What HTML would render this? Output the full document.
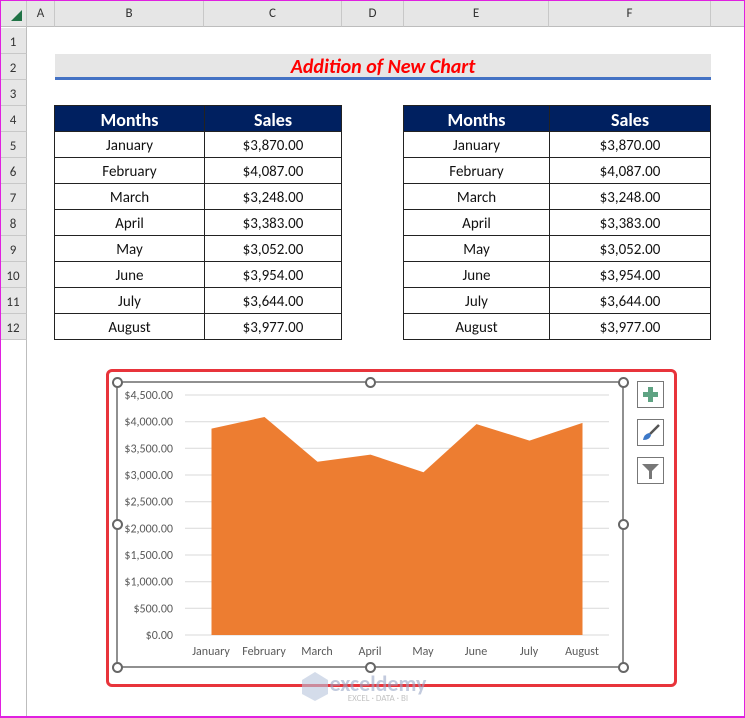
<!DOCTYPE html>
<html><head><meta charset="utf-8"><style>
*{margin:0;padding:0;box-sizing:border-box}
body{width:745px;height:718px;overflow:hidden;background:#fff;font-family:Calibri,"Liberation Sans",sans-serif;position:relative}
.a{position:absolute}
.ch{position:absolute;top:0;height:27px;background:#e6e6e6;border-right:1px solid #c8c8c8;border-bottom:1px solid #bdbdbd;font-size:13px;color:#333;text-align:center;line-height:27px}
.rh{position:absolute;left:0;width:27px;height:26px;background:#e6e6e6;border-bottom:1px solid #c8c8c8;border-right:1px solid #bdbdbd;font-size:13px;color:#333;text-align:center;line-height:29px}
table{position:absolute;border-collapse:collapse;font-size:15px}
td{border:1px solid #222;height:26px;text-align:center;padding:0;color:#111;padding-top:2px}
th{background:#002060;color:#fff;border:1px solid #222;height:26px;font-size:18px;font-weight:bold;padding-top:2px}
.btn{position:absolute;left:637px;width:27px;height:27px;border:1px solid #777;background:#fff}
.h{position:absolute;width:11px;height:11px;border:2px solid #666;border-radius:50%;background:#fff}
</style></head><body>
<div class="a" style="left:0;top:0;width:27px;height:718px;background:#fff;border-right:1px solid #bdbdbd"></div>
<div class="ch" style="left:0;width:27px"><svg width="27" height="27"><polygon points="11,21 22,21 22,10" fill="#217346"/></svg></div>
<div class="ch" style="left:27px;width:28px">A</div>
<div class="ch" style="left:55px;width:149px">B</div>
<div class="ch" style="left:204px;width:138px">C</div>
<div class="ch" style="left:342px;width:62px">D</div>
<div class="ch" style="left:404px;width:145px">E</div>
<div class="ch" style="left:549px;width:162px">F</div>
<div class="ch" style="left:711px;width:34px;border-right:none"></div>
<div class="rh" style="top:28px">1</div><div class="rh" style="top:54px">2</div><div class="rh" style="top:80px">3</div><div class="rh" style="top:106px">4</div><div class="rh" style="top:132px">5</div><div class="rh" style="top:158px">6</div><div class="rh" style="top:184px">7</div><div class="rh" style="top:210px">8</div><div class="rh" style="top:236px">9</div><div class="rh" style="top:262px">10</div><div class="rh" style="top:288px">11</div><div class="rh" style="top:314px">12</div>
<div class="a" style="left:55px;top:54px;width:656px;height:26px;background:#e6e6e6;border-bottom:3px solid #4472c4;text-align:center;color:#f00;font-style:italic;font-weight:bold;font-size:20px;line-height:26px">Addition of New Chart</div>
<table style="left:54px;top:105px;width:288px"><tr><th style="width:150px">Months</th><th>Sales</th></tr>
<tr><td>January</td><td>$3,870.00</td></tr><tr><td>February</td><td>$4,087.00</td></tr><tr><td>March</td><td>$3,248.00</td></tr><tr><td>April</td><td>$3,383.00</td></tr><tr><td>May</td><td>$3,052.00</td></tr><tr><td>June</td><td>$3,954.00</td></tr><tr><td>July</td><td>$3,644.00</td></tr><tr><td>August</td><td>$3,977.00</td></tr></table>
<table style="left:403px;top:105px;width:308px"><tr><th style="width:146px">Months</th><th>Sales</th></tr>
<tr><td>January</td><td>$3,870.00</td></tr><tr><td>February</td><td>$4,087.00</td></tr><tr><td>March</td><td>$3,248.00</td></tr><tr><td>April</td><td>$3,383.00</td></tr><tr><td>May</td><td>$3,052.00</td></tr><tr><td>June</td><td>$3,954.00</td></tr><tr><td>July</td><td>$3,644.00</td></tr><tr><td>August</td><td>$3,977.00</td></tr></table>
<div class="a" style="left:106px;top:369px;width:571px;height:318px;border:3px solid #e8343b;border-radius:6px"></div>
<svg class="a" style="left:0;top:0" width="745" height="718" font-family="Calibri,'Liberation Sans',sans-serif" font-size="12" fill="#595959">
<rect x="117" y="382" width="506" height="285" fill="none" stroke="#555" stroke-width="1.3"/>
<g stroke="#d9d9d9">
<line x1="185" y1="395" x2="609" y2="395"/><line x1="185" y1="421.7" x2="609" y2="421.7"/><line x1="185" y1="448.3" x2="609" y2="448.3"/><line x1="185" y1="475" x2="609" y2="475"/><line x1="185" y1="501.7" x2="609" y2="501.7"/><line x1="185" y1="528.3" x2="609" y2="528.3"/><line x1="185" y1="555" x2="609" y2="555"/><line x1="185" y1="581.7" x2="609" y2="581.7"/><line x1="185" y1="608.3" x2="609" y2="608.3"/><line x1="185" y1="635" x2="609" y2="635"/>
</g>
<polygon fill="#ed7d31" points="211.5,635 211.5,428.6 264.5,417.0 317.5,461.8 370.5,454.6 423.5,472.2 476.5,424.1 529.5,440.6 582.5,422.9 582.5,635"/>
<g text-anchor="end">
<text x="173" y="399">$4,500.00</text><text x="173" y="425.7">$4,000.00</text><text x="173" y="452.3">$3,500.00</text><text x="173" y="479">$3,000.00</text><text x="173" y="505.7">$2,500.00</text><text x="173" y="532.3">$2,000.00</text><text x="173" y="559">$1,500.00</text><text x="173" y="585.7">$1,000.00</text><text x="173" y="612.3">$500.00</text><text x="173" y="639">$0.00</text>
</g>
<g text-anchor="middle">
<text x="211" y="655">January</text><text x="264" y="655">February</text><text x="317" y="655">March</text><text x="370" y="655">April</text><text x="423" y="655">May</text><text x="476" y="655">June</text><text x="529" y="655">July</text><text x="582" y="655">August</text>
</g>
<path d="M302 680 L315 672 L328 680 L328 694 L315 701 L302 694Z" fill="#b8c4dc" opacity="0.6"/>
<text x="378" y="691" font-size="22" font-weight="bold" fill="#9aa8c8" opacity="0.6" text-anchor="middle">exceldemy</text>
<text x="378" y="701" font-size="9" fill="#aaa" text-anchor="middle" opacity="0.7">EXCEL · DATA · BI</text>
</svg>
<div class="h" style="left:112px;top:377px"></div><div class="h" style="left:365px;top:377px"></div><div class="h" style="left:618px;top:377px"></div>
<div class="h" style="left:112px;top:519px"></div><div class="h" style="left:618px;top:519px"></div>
<div class="h" style="left:112px;top:662px"></div><div class="h" style="left:365px;top:662px"></div><div class="h" style="left:618px;top:662px"></div>
<div class="btn" style="top:381px"><svg width="25" height="25"><rect x="10" y="5" width="5" height="15" fill="#5fa383"/><rect x="5" y="10" width="15" height="5" fill="#5fa383"/></svg></div>
<div class="btn" style="top:419px"><svg width="25" height="25"><line x1="12" y1="14" x2="21" y2="5" stroke="#555" stroke-width="2.5"/><path d="M5 20 Q6 14 11 13 L13 15 Q12 20 5 20Z" fill="#3c78c8"/></svg></div>
<div class="btn" style="top:457px"><svg width="25" height="25"><path d="M4 6 H21 L14 13 V21 H11 V13Z" fill="#777"/></svg></div>
<div class="a" style="left:0;top:0;width:745px;height:718px;border:1px solid #e020e0;border-bottom-width:2px;pointer-events:none"></div>
</body></html>
